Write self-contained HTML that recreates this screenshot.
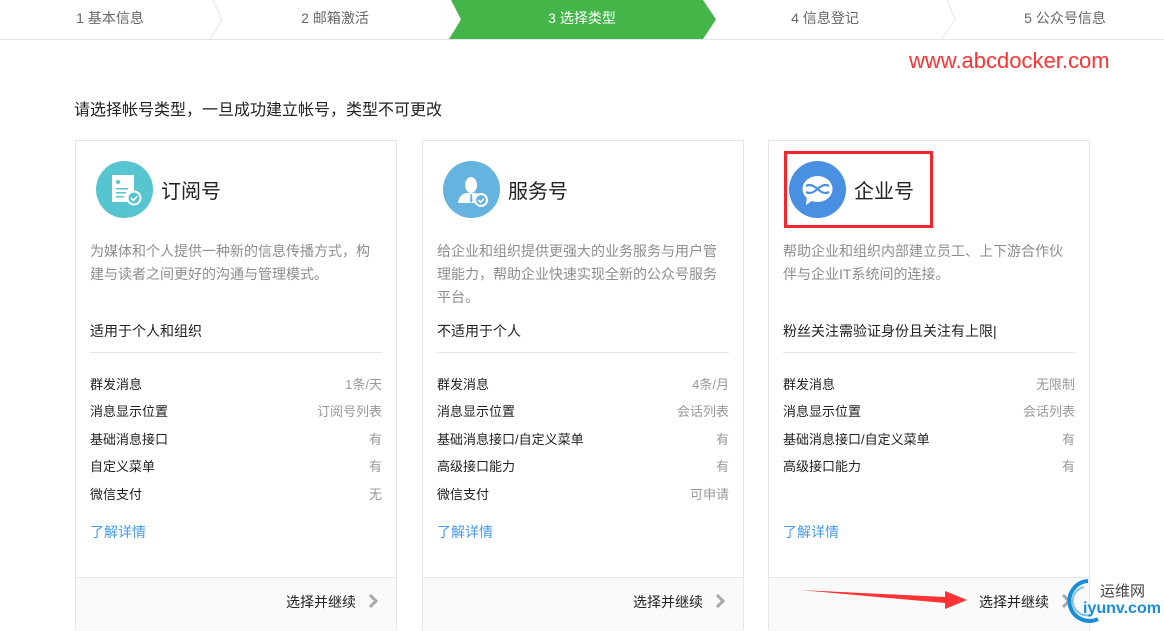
<!DOCTYPE html>
<html><head><meta charset="utf-8"><style>
*{margin:0;padding:0;box-sizing:border-box}
body{width:1164px;height:625px;overflow:hidden;background:#fff;font-family:"Liberation Sans","Noto Sans CJK SC",sans-serif;position:relative;color:#222}
.a{position:absolute;white-space:nowrap}
.step{position:absolute;top:0;height:39px;line-height:36px;font-size:14px;color:#666;text-align:center}
.card{position:absolute;top:140px;width:322px;height:490px;border:1px solid #e4e6ea;background:#fff}
.ic{position:absolute;left:20px;top:20px;width:57px;height:57px;border-radius:50%}
.tt{position:absolute;left:85px;top:34px;font-size:20px;color:#222}
.desc{position:absolute;left:14px;top:99px;width:284px;font-size:14px;line-height:23px;color:#8d8d8d;white-space:normal}
.sub{position:absolute;left:14px;top:180px;font-size:14px;color:#222}
.sep{position:absolute;left:14px;right:14px;top:211px;border-top:1px solid #e4e6ea}
.row{position:absolute;left:14px;right:14px;font-size:13px;color:#222;height:20px}
.row span{float:right;color:#999}
.lk{position:absolute;left:14px;top:381px;font-size:14px;color:#459ae9}
.ft{position:absolute;left:0;right:0;top:436px;height:54px;background:#fafafa;border-top:1px solid #e4e6ea}
.ft b{position:absolute;right:40px;top:14px;font-weight:normal;font-size:14px;color:#222}
.ft i{position:absolute;right:20px;top:18px;width:10px;height:10px;border-right:3px solid #aaa;border-top:3px solid #aaa;transform:rotate(45deg)}
</style></head><body>
<svg class="a" style="left:0;top:0" width="1164" height="40">
<polygon points="451,0 703,0 716,19.5 703,39 449,39 461,19.5" fill="#44b549"/>
<polyline points="213,0 222,19.5 210,39" fill="none" stroke="#e6e6e6"/>
<polyline points="947,0 955,19.5 942,39" fill="none" stroke="#e6e6e6"/>
<line x1="0" y1="39.5" x2="1164" y2="39.5" stroke="#e6e6e6"/>
</svg>
<div class="step" style="left:40px;width:140px">1 基本信息</div>
<div class="step" style="left:265px;width:140px">2 邮箱激活</div>
<div class="step" style="left:512px;width:140px;color:#fff">3 选择类型</div>
<div class="step" style="left:755px;width:140px">4 信息登记</div>
<div class="step" style="left:995px;width:140px">5 公众号信息</div>
<div class="a" style="left:909px;top:48px;font-size:22px;color:#f33">www.abcdocker.com</div>
<div class="a" style="left:74px;top:96px;font-size:16px;color:#222">请选择帐号类型，一旦成功建立帐号，类型不可更改</div>

<div class="card" style="left:75px">
<div class="ic" style="background:#56c5d0"><svg width="57" height="57"><rect x="16" y="14" width="22" height="27" fill="#fff"/><circle cx="22" cy="21" r="2" fill="#56c5d0"/><rect x="20" y="27" width="12" height="1.5" fill="#56c5d0"/><rect x="20" y="31" width="10" height="1.5" fill="#56c5d0"/><rect x="20" y="35" width="8" height="1.5" fill="#56c5d0"/><circle cx="38" cy="37" r="6.5" fill="#56c5d0" stroke="#fff" stroke-width="2"/><polyline points="35,37 37.5,39.5 41.5,35" fill="none" stroke="#fff" stroke-width="1.6"/></svg></div>
<div class="tt">订阅号</div>
<div class="desc">为媒体和个人提供一种新的信息传播方式，构建与读者之间更好的沟通与管理模式。</div>
<div class="sub">适用于个人和组织</div><div class="sep"></div>
<div class="row" style="top:233px">群发消息<span>1条/天</span></div>
<div class="row" style="top:260px">消息显示位置<span>订阅号列表</span></div>
<div class="row" style="top:288px">基础消息接口<span>有</span></div>
<div class="row" style="top:315px">自定义菜单<span>有</span></div>
<div class="row" style="top:343px">微信支付<span>无</span></div>
<div class="lk">了解详情</div>
<div class="ft"><b>选择并继续</b><i></i></div>
</div>

<div class="card" style="left:422px">
<div class="ic" style="background:#65b4e0"><svg width="57" height="57"><ellipse cx="28" cy="24" rx="6" ry="8" fill="#fff"/><path d="M15 42 Q16 33 24 32 L32 32 Q39 33 40 42 Z" fill="#fff"/><path d="M27.5 33 L29 33 L29.5 40 L28 42 L27 40Z" fill="#65b4e0"/><circle cx="38" cy="39" r="6" fill="#65b4e0" stroke="#fff" stroke-width="2"/><polyline points="35.2,39 37.5,41.3 41,37.5" fill="none" stroke="#fff" stroke-width="1.6"/></svg></div>
<div class="tt">服务号</div>
<div class="desc">给企业和组织提供更强大的业务服务与用户管理能力，帮助企业快速实现全新的公众号服务平台。</div>
<div class="sub">不适用于个人</div><div class="sep"></div>
<div class="row" style="top:233px">群发消息<span>4条/月</span></div>
<div class="row" style="top:260px">消息显示位置<span>会话列表</span></div>
<div class="row" style="top:288px">基础消息接口/自定义菜单<span>有</span></div>
<div class="row" style="top:315px">高级接口能力<span>有</span></div>
<div class="row" style="top:343px">微信支付<span>可申请</span></div>
<div class="lk">了解详情</div>
<div class="ft"><b>选择并继续</b><i></i></div>
</div>

<div class="card" style="left:768px">
<div class="ic" style="background:#4a90e2"><svg width="57" height="57"><ellipse cx="28.5" cy="28" rx="15" ry="13" fill="#fff"/><path d="M18 36 L17 44 L24 39Z" fill="#fff"/><path d="M17 25 Q22 22 28.5 28 Q35 34 40 31 M17 31 Q22 34 28.5 28 Q35 22 40 25" fill="none" stroke="#4a90e2" stroke-width="2.2"/></svg></div>
<div class="tt">企业号</div>
<div class="desc">帮助企业和组织内部建立员工、上下游合作伙伴与企业IT系统间的连接。</div>
<div class="sub">粉丝关注需验证身份且关注有上限|</div><div class="sep"></div>
<div class="row" style="top:233px">群发消息<span>无限制</span></div>
<div class="row" style="top:260px">消息显示位置<span>会话列表</span></div>
<div class="row" style="top:288px">基础消息接口/自定义菜单<span>有</span></div>
<div class="row" style="top:315px">高级接口能力<span>有</span></div>
<div class="lk">了解详情</div>
<div class="ft"><b>选择并继续</b><i></i></div>
</div>

<div class="a" style="left:784px;top:151px;width:149px;height:77px;border:3px solid #f0282d"></div>
<svg class="a" style="left:795px;top:585px" width="180" height="30"><polygon points="5,5 150,12 150,6 172,15 150,24 150,18" fill="#f33"/></svg>
<svg class="a" style="left:1060px;top:575px" width="104" height="50"><path d="M28 6 A20 20 0 1 0 38 44" fill="none" stroke="#1a8cd8" stroke-width="4"/><path d="M24 12 A14 14 0 1 0 30 40" fill="none" stroke="#7cc4ef" stroke-width="2"/></svg>
<div class="a" style="left:1100px;top:580px;font-size:15px;color:#444">运维网</div>
<div class="a" style="left:1083px;top:600px;font-size:16px;color:#1a8cd8;font-weight:bold">iyunv.com</div>
</body></html>
